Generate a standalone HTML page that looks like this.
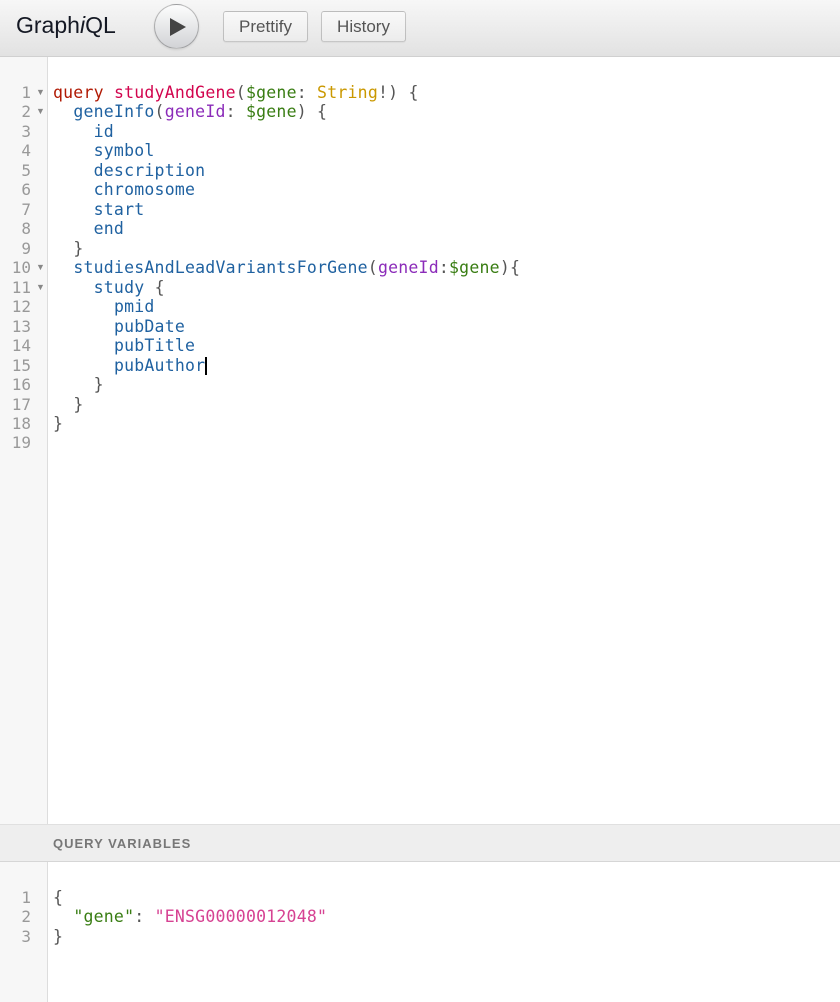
<!DOCTYPE html>
<html><head><meta charset="utf-8"><style>
*{margin:0;padding:0;box-sizing:border-box}
body{width:840px;height:1002px;overflow:hidden;background:#fff;font-family:"Liberation Sans",sans-serif;position:relative}
.top{position:absolute;left:0;top:0;width:840px;height:57px;background:linear-gradient(#f7f7f7,#e2e2e2);border-bottom:1px solid #d0d0d0}
.title{position:absolute;left:16px;top:12px;font-size:23px;color:#141823}
.run{position:absolute;left:154px;top:4px;width:45px;height:45px;border-radius:50%;background:linear-gradient(#fdfdfd,#d2d3d6);border:1px solid rgba(0,0,0,.25);box-shadow:0 1px 2px rgba(0,0,0,.1)}
.run svg{position:absolute;left:14px;top:12px}
.btn{position:absolute;top:11px;height:31px;background:linear-gradient(#f9f9f9,#ececec);border:1px solid rgba(0,0,0,.2);border-radius:3px;font-size:17px;color:#555;line-height:29px;text-align:center;box-shadow:0 1px 1px rgba(0,0,0,.05)}
.gut{position:absolute;left:0;width:48px;background:#f7f7f7;border-right:1px solid #ddd}
.code{position:absolute;font-family:"DejaVu Sans Mono","Liberation Mono",monospace;font-size:16.5px;letter-spacing:0.22px;line-height:19.47px;white-space:pre}
.ln{position:absolute;left:0;width:31px;text-align:right;color:#999;font-family:"DejaVu Sans Mono",monospace;font-size:16px;line-height:19.47px;white-space:pre}
.fold{position:absolute;left:36px;color:#888;font-size:9px;line-height:19.47px;white-space:pre}
.k{color:#B11A04}.d{color:#D2054E}.v{color:#397D13}.t{color:#CA9800}.p{color:#1F61A0}.a{color:#8B2BB9}.u{color:#555}.s{color:#D64292}
.vbar{position:absolute;left:0;top:824px;width:840px;height:38px;background:#eeeeee;border-top:1px solid #e0e0e0;border-bottom:1px solid #d6d6d6;font-size:13px;font-weight:bold;letter-spacing:1px;color:#777;padding:11px 0 0 53px}
.cur{position:absolute;left:205px;top:357px;width:1.5px;height:18px;background:#000}
</style></head><body>
<div class="top">
<div class="title">Graph<i>i</i>QL</div>
<div class="run"><svg width="18" height="20" viewBox="0 0 18 20"><path d="M1 1 L17 10 L1 19Z" fill="#444"/></svg></div>
<div class="btn" style="left:223px;width:85px">Prettify</div>
<div class="btn" style="left:321px;width:85px">History</div>
</div>
<div class="gut" style="top:57px;height:767px"></div>
<div class="ln" style="top:83px">1
2
3
4
5
6
7
8
9
10
11
12
13
14
15
16
17
18
19</div>
<div class="fold" style="top:83px">▼
▼
 
 
 
 
 
 
 
▼
▼</div>
<div class="code" style="left:53px;top:83px"><span class="k">query</span> <span class="d">studyAndGene</span><span class="u">(</span><span class="v">$gene</span><span class="u">:</span> <span class="t">String</span><span class="u">!)</span> <span class="u">{</span>
  <span class="p">geneInfo</span><span class="u">(</span><span class="a">geneId</span><span class="u">:</span> <span class="v">$gene</span><span class="u">)</span> <span class="u">{</span>
    <span class="p">id</span>
    <span class="p">symbol</span>
    <span class="p">description</span>
    <span class="p">chromosome</span>
    <span class="p">start</span>
    <span class="p">end</span>
  <span class="u">}</span>
  <span class="p">studiesAndLeadVariantsForGene</span><span class="u">(</span><span class="a">geneId</span><span class="u">:</span><span class="v">$gene</span><span class="u">){</span>
    <span class="p">study</span> <span class="u">{</span>
      <span class="p">pmid</span>
      <span class="p">pubDate</span>
      <span class="p">pubTitle</span>
      <span class="p">pubAuthor</span>
    <span class="u">}</span>
  <span class="u">}</span>
<span class="u">}</span>
</div>
<div class="cur"></div>
<div class="vbar">QUERY VARIABLES</div>
<div class="gut" style="top:862px;height:140px"></div>
<div class="ln" style="top:888px">1
2
3</div>
<div class="code" style="left:53px;top:888px"><span class="u">{</span>
  <span class="v">"gene"</span><span class="u">:</span> <span class="s">"ENSG00000012048"</span>
<span class="u">}</span></div>
</body></html>
